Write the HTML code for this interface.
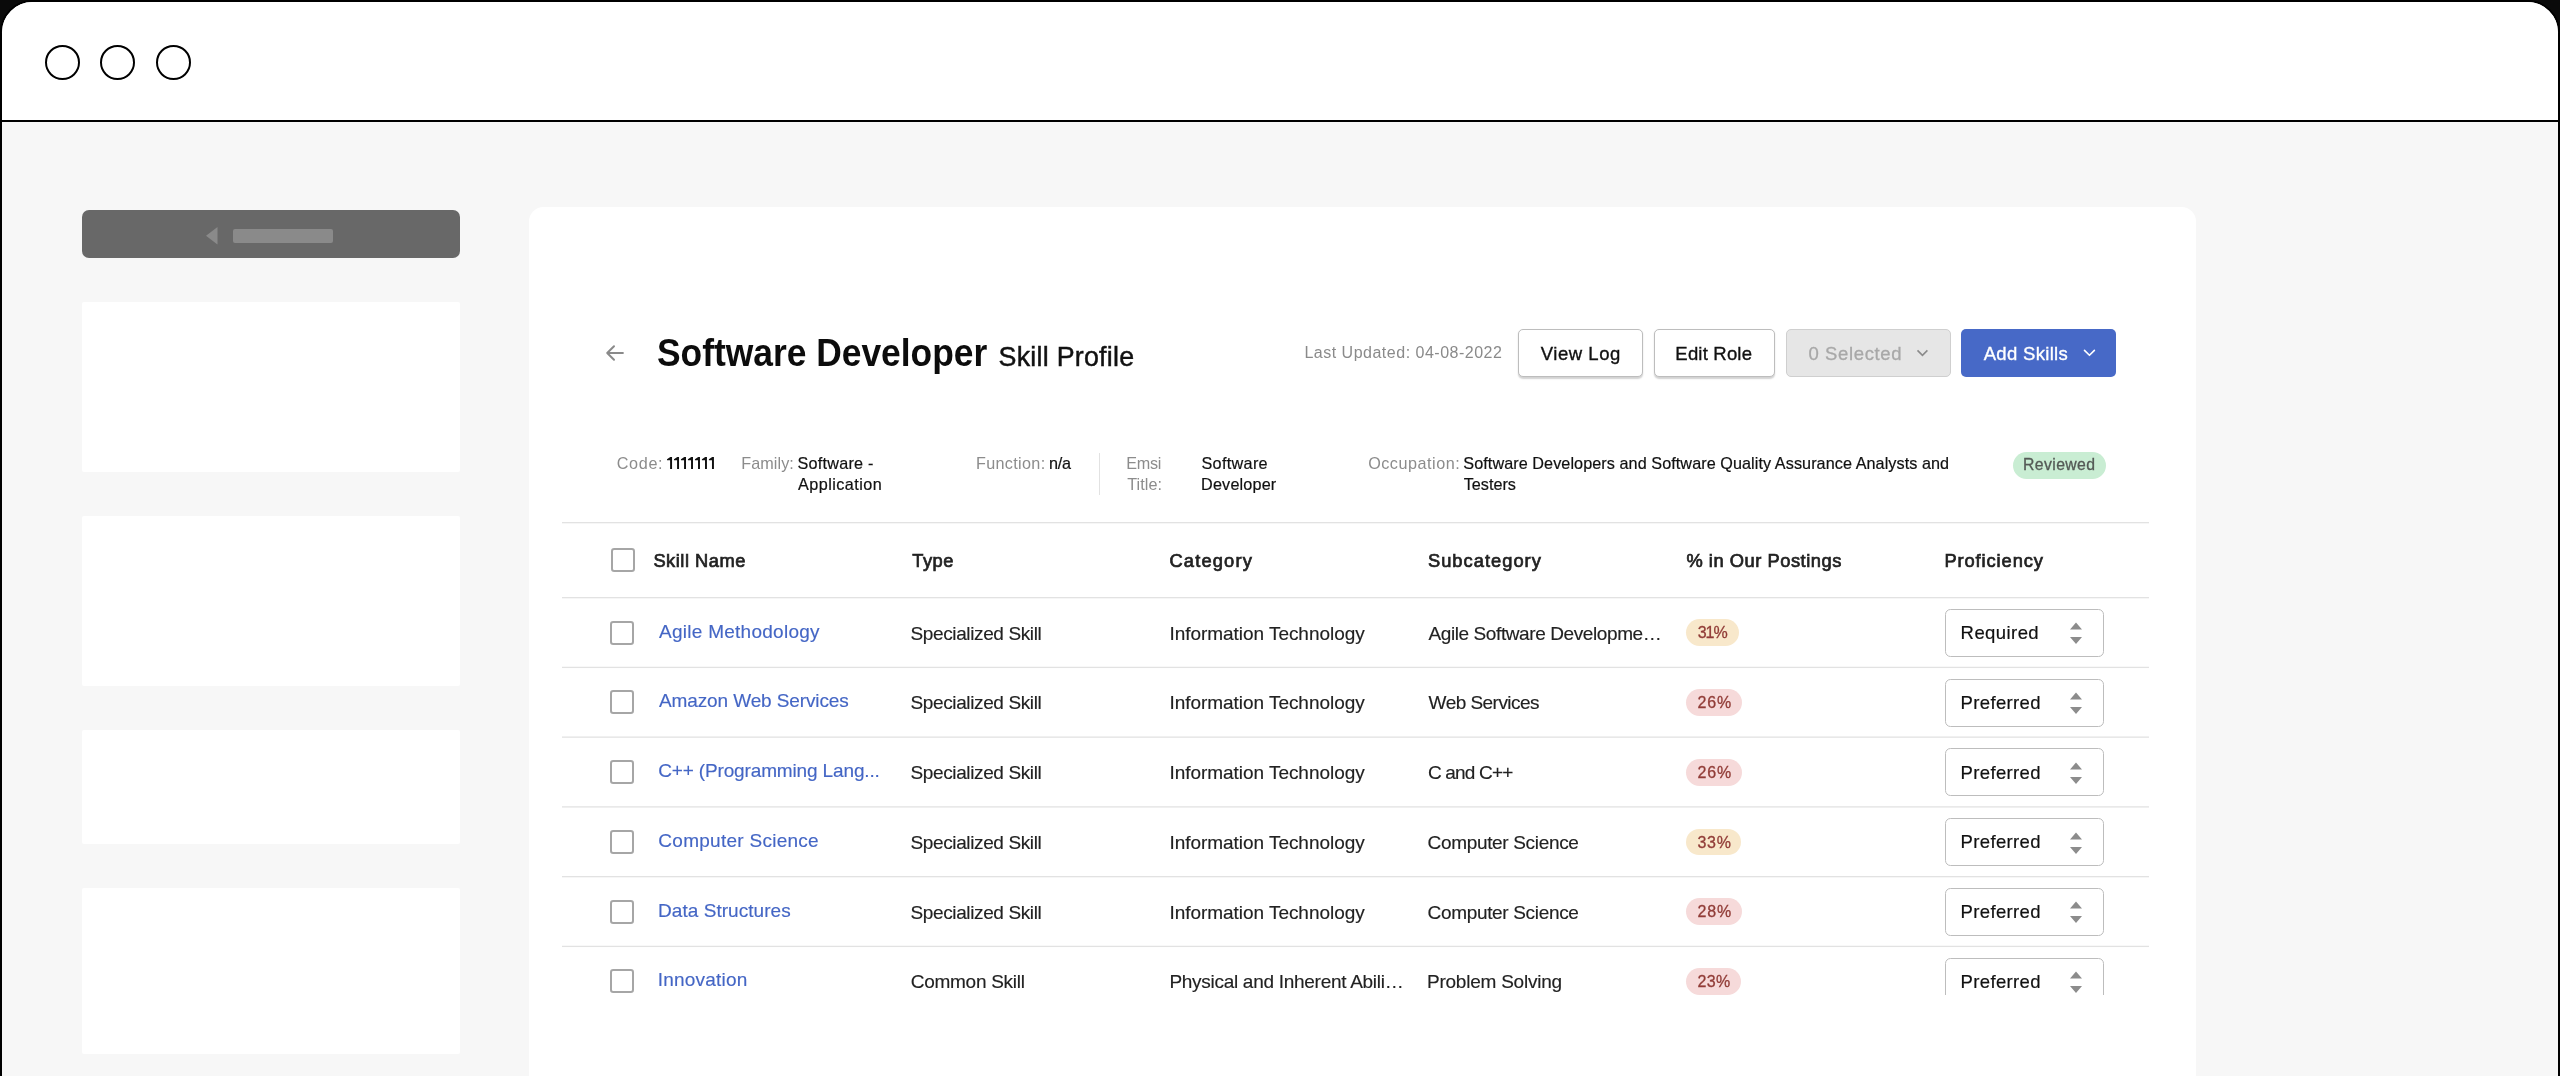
<!DOCTYPE html>
<html>
<head>
<meta charset="utf-8">
<title>Skill Profile</title>
<style>
html,body{margin:0;padding:0;}
body{width:2560px;height:1076px;background:#0a0a0a;overflow:hidden;position:relative;font-family:"Liberation Sans",sans-serif;color:#111;}
*{box-sizing:border-box;}
#win{position:absolute;left:0;top:0;width:2560px;height:1200px;border:2px solid #000;border-radius:32.5px;background:#f7f7f7;}
#bar{position:absolute;left:2px;top:2px;width:2556px;height:118px;background:#fff;border-radius:30.5px 30.5px 0 0;}
#barline{position:absolute;left:0;top:120px;width:2560px;height:2px;background:#000;}
.dot{position:absolute;top:44.9px;width:34.9px;height:34.9px;border:2px solid #000;border-radius:50%;background:#fff;}
.sb{position:absolute;left:82px;width:378px;background:#fff;border-radius:2px;}
#card{position:absolute;left:529.3px;top:206.7px;width:1667px;height:900px;background:#fff;border-radius:14.5px;}
.t{position:absolute;white-space:nowrap;line-height:1;}
.btn{position:absolute;top:329px;height:48px;border-radius:5px;}
.bt{font-size:18.5px;}
.hl{position:absolute;left:562px;width:1587.3px;height:3px;}
.cb{position:absolute;left:610.4px;width:24px;height:24px;border:2.4px solid #a6a6a6;border-radius:3.2px;background:#fff;}
.lnk{color:#4466c5;font-size:19px;-webkit-text-stroke:0.15px #4466c5;}
.lato{color:#222;font-size:19px;-webkit-text-stroke:0.15px #222;}
.pill{position:absolute;left:1686.3px;height:26.8px;border-radius:14px;}
.pt{font-size:16px;color:#913c37;-webkit-text-stroke:0.3px #913c37;}
.sel{position:absolute;left:1945.3px;width:158.5px;height:48px;border:1.5px solid #bdbdbd;border-radius:5.5px;background:#fff;}
.st{font-size:18.5px;color:#111;-webkit-text-stroke:0.2px #111;}
.sel svg{position:absolute;left:122.8px;top:12.5px;}
.th{font-size:18.3px;color:#222;-webkit-text-stroke:0.7px #222;}
.mk{color:#8c8c8c;font-size:16.2px;}
.mv{color:#111;font-size:16.2px;-webkit-text-stroke:0.2px #111;}
#clip{position:absolute;left:0;top:0;width:2560px;height:995px;overflow:hidden;}
#layer{position:absolute;left:0;top:0;width:2560px;height:1076px;will-change:transform;}
</style>
</head>
<body>
<div id="layer">
<div id="win"></div>
<div id="bar"></div>
<div id="barline"></div>
<div class="dot" style="left:45.2px"></div>
<div class="dot" style="left:100.3px"></div>
<div class="dot" style="left:155.8px"></div>

<div id="backbtn" style="position:absolute;left:82px;top:210px;width:378px;height:48px;background:#686868;border-radius:7px;"></div>
<svg style="position:absolute;left:205px;top:226px" width="14" height="20" viewBox="0 0 14 20"><path d="M12.5 1 L12.5 18.5 L1 9.7 Z" fill="#8a8a8a"/></svg>
<div style="position:absolute;left:233px;top:229px;width:100px;height:14px;background:#8a8a8a;border-radius:2px;"></div>
<div class="sb" style="top:302px;height:170px"></div>
<div class="sb" style="top:516px;height:170px"></div>
<div class="sb" style="top:730px;height:114px"></div>
<div class="sb" style="top:888px;height:166px"></div>

<div id="card"></div>

<svg style="position:absolute;left:605px;top:343px" width="20" height="20" viewBox="0 0 20 20"><path d="M17.9 10 H2.2 M9 3.2 L2.2 10 L9 16.8" fill="none" stroke="#8a8a8a" stroke-width="2" stroke-linecap="round" stroke-linejoin="round"/></svg>

<div class="btn" id="b1" style="left:1517.5px;width:125.5px;border:1.5px solid #bdbdbd;background:#fff;box-shadow:0 1.5px 1.5px rgba(0,0,0,0.18)"></div>
<div class="btn" id="b2" style="left:1653.5px;width:121.5px;border:1.5px solid #bdbdbd;background:#fff;box-shadow:0 1.5px 1.5px rgba(0,0,0,0.18)"></div>
<div class="btn" id="b3" style="left:1786px;width:164.5px;border:1.5px solid #cfcfcf;background:#e6e6e6;"></div>
<svg style="position:absolute;left:1916px;top:348px" width="14" height="10" viewBox="0 0 14 10"><path d="M1.5 2.4 L6.45 7.3 L11.4 2.4" fill="none" stroke="#8a8a8a" stroke-width="1.6" stroke-linecap="butt" stroke-linejoin="miter"/></svg>
<div class="btn" id="b4" style="left:1961px;width:155px;background:#4769c7;"></div>
<svg style="position:absolute;left:2082.9px;top:348px" width="14" height="10" viewBox="0 0 14 10"><path d="M1.5 2.4 L6.45 7.3 L11.4 2.4" fill="none" stroke="#fff" stroke-width="1.6" stroke-linecap="round" stroke-linejoin="round"/></svg>

<div style="position:absolute;left:1098.5px;top:453px;width:1.5px;height:42px;background:#e2e2e2"></div>
<div style="position:absolute;left:2013px;top:452px;width:92.5px;height:27px;border-radius:14px;background:#c9edd3"></div>

<div class="cb" style="left:611px;top:548.1px"></div>
<span class="t" id="title" style="left:656.50px;top:333.40px;font-size:39px;font-weight:bold;color:#0c0c0c;transform:scaleX(0.907);transform-origin:0 0;">Software Developer</span>
<span class="t" id="sub" style="left:998.57px;top:343.60px;letter-spacing:0.252px;font-size:26.8px;color:#111;-webkit-text-stroke:0.45px #111;">Skill Profile</span>
<span class="t" id="upd" style="left:1304.39px;top:344.90px;letter-spacing:0.506px;font-size:16px;color:#8a8a8a;">Last Updated: 04-08-2022</span>
<span class="t bt" id="b1t" style="left:1540.73px;top:344.50px;letter-spacing:0.545px;color:#111;-webkit-text-stroke:0.35px #111;">View Log</span>
<span class="t bt" id="b2t" style="left:1675.35px;top:344.50px;letter-spacing:0.193px;color:#111;-webkit-text-stroke:0.35px #111;">Edit Role</span>
<span class="t bt" id="b3t" style="left:1808.38px;top:344.50px;letter-spacing:0.643px;color:#a8a8a8;-webkit-text-stroke:0.3px #a8a8a8;">0 Selected</span>
<span class="t bt" id="b4t" style="left:1983.66px;top:344.50px;letter-spacing:0.319px;color:#fff;-webkit-text-stroke:0.35px #fff;">Add Skills</span>
<span class="t mk" id="m1" style="left:616.75px;top:455.20px;letter-spacing:0.660px;">Code:</span>
<svg id="m2" style="position:absolute;left:667px;top:456.5px" width="48" height="12" viewBox="0 0 48 12" fill="#111"><path d="M0.00 2.2 L3.30 0 L5.05 0 L5.05 11.9 L3.10 11.9 L3.10 3.3 L0.00 3.3 Z"/><path d="M6.98 2.2 L10.28 0 L12.03 0 L12.03 11.9 L10.08 11.9 L10.08 3.3 L6.98 3.3 Z"/><path d="M13.96 2.2 L17.26 0 L19.01 0 L19.01 11.9 L17.06 11.9 L17.06 3.3 L13.96 3.3 Z"/><path d="M20.94 2.2 L24.24 0 L25.99 0 L25.99 11.9 L24.04 11.9 L24.04 3.3 L20.94 3.3 Z"/><path d="M27.92 2.2 L31.22 0 L32.97 0 L32.97 11.9 L31.02 11.9 L31.02 3.3 L27.92 3.3 Z"/><path d="M34.90 2.2 L38.20 0 L39.95 0 L39.95 11.9 L38.00 11.9 L38.00 3.3 L34.90 3.3 Z"/><path d="M41.88 2.2 L45.18 0 L46.93 0 L46.93 11.9 L44.98 11.9 L44.98 3.3 L41.88 3.3 Z"/></svg>
<span class="t mk" id="m3" style="left:741.29px;top:455.20px;letter-spacing:0.056px;">Family:</span>
<span class="t mv" id="m4" style="left:797.38px;top:455.20px;letter-spacing:0.262px;">Software -</span>
<span class="t mv" id="m5" style="left:798.00px;top:476.00px;letter-spacing:0.449px;">Application</span>
<span class="t mk" id="m6" style="left:975.93px;top:455.20px;letter-spacing:0.331px;">Function:</span>
<span class="t mv" id="m7" style="left:1048.89px;top:455.20px;letter-spacing:-0.150px;">n/a</span>
<span class="t mk" id="m8" style="left:1126.26px;top:455.20px;letter-spacing:-0.307px;">Emsi</span>
<span class="t mk" id="m9" style="left:1127.28px;top:476.00px;letter-spacing:0.063px;">Title:</span>
<span class="t mv" id="m10" style="left:1201.43px;top:455.20px;letter-spacing:0.331px;">Software</span>
<span class="t mv" id="m11" style="left:1201.10px;top:476.00px;letter-spacing:0.166px;">Developer</span>
<span class="t mk" id="m12" style="left:1368.13px;top:455.20px;letter-spacing:0.528px;">Occupation:</span>
<span class="t mv" id="m13" style="left:1463.33px;top:455.20px;letter-spacing:0.071px;">Software Developers and Software Quality Assurance Analysts and</span>
<span class="t mv" id="m14" style="left:1463.66px;top:476.00px;letter-spacing:0.016px;">Testers</span>
<span class="t" id="rev" style="left:2022.99px;top:457.30px;letter-spacing:0.385px;font-size:15.8px;color:#545a56;-webkit-text-stroke:0.3px #545a56;">Reviewed</span>
<span class="t th" id="h1" style="left:653.39px;top:551.70px;letter-spacing:0.515px;">Skill Name</span>
<span class="t th" id="h2" style="left:912.37px;top:551.70px;letter-spacing:0.441px;">Type</span>
<span class="t th" id="h3" style="left:1169.40px;top:551.70px;letter-spacing:1.188px;">Category</span>
<span class="t th" id="h4" style="left:1427.92px;top:551.70px;letter-spacing:1.030px;">Subcategory</span>
<span class="t th" id="h5" style="left:1686.45px;top:551.70px;letter-spacing:0.536px;">% in Our Postings</span>
<span class="t th" id="h6" style="left:1944.47px;top:551.70px;letter-spacing:0.902px;">Proficiency</span>
<div class="hl" style="top:522px;background:linear-gradient(to bottom,#e2e2e2 0 1px,#f6f6f6 1px 2px,#ffffff 2px 3px)"></div>
<div id="clip">
<div class="hl" style="top:597px;background:linear-gradient(to bottom,#e2e2e2 0 1px,#f6f6f6 1px 2px,#ffffff 2px 3px)"></div>
<div class="cb" style="top:620.70px"></div>
<span class="t lnk" id="l0" style="left:659.01px;top:621.70px;letter-spacing:0.267px;">Agile Methodology</span>
<span class="t lato" id="a0" style="left:910.53px;top:623.50px;letter-spacing:-0.376px;">Specialized Skill</span>
<span class="t lato" id="g0" style="left:1169.46px;top:623.50px;letter-spacing:-0.042px;">Information Technology</span>
<span class="t lato" id="c0" style="left:1428.46px;top:623.50px;letter-spacing:-0.398px;">Agile Software Developme…</span>
<div class="pill" style="top:619.30px;width:52.5px;background:#f8e8cb"></div>
<span class="t pt" id="p0" style="left:1697.63px;top:625.30px;letter-spacing:-0.973px;">31%</span>
<div class="sel" style="top:608.80px"><svg width="14" height="23" viewBox="0 0 14 23"><path d="M7 0.6 L13 7.5 L1 7.5 Z M7 22 L13 15.1 L1 15.1 Z" fill="#8c8c8c"/></svg></div>
<span class="t st" id="s0" style="left:1960.61px;top:624.20px;letter-spacing:0.421px;">Required</span>
<div class="hl" style="top:666px;background:linear-gradient(to bottom,#f8f8f8 0 1px,#e2e2e2 1px 2px,#fefefe 2px 3px)"></div>
<div class="cb" style="top:690.45px"></div>
<span class="t lnk" id="l1" style="left:659.01px;top:691.45px;letter-spacing:-0.115px;">Amazon Web Services</span>
<span class="t lato" id="a1" style="left:910.53px;top:693.25px;letter-spacing:-0.376px;">Specialized Skill</span>
<span class="t lato" id="g1" style="left:1169.46px;top:693.25px;letter-spacing:-0.042px;">Information Technology</span>
<span class="t lato" id="c1" style="left:1428.61px;top:693.25px;letter-spacing:-0.541px;">Web Services</span>
<div class="pill" style="top:689.05px;width:55.6px;background:#f6dada"></div>
<span class="t pt" id="p1" style="left:1697.41px;top:695.05px;letter-spacing:0.937px;">26%</span>
<div class="sel" style="top:678.55px"><svg width="14" height="23" viewBox="0 0 14 23"><path d="M7 0.6 L13 7.5 L1 7.5 Z M7 22 L13 15.1 L1 15.1 Z" fill="#8c8c8c"/></svg></div>
<span class="t st" id="s1" style="left:1960.61px;top:693.95px;letter-spacing:0.336px;">Preferred</span>
<div class="hl" style="top:736px;background:linear-gradient(to bottom,#f0f0f0 0 1px,#e8e8e8 1px 2px,#ffffff 2px 3px)"></div>
<div class="cb" style="top:760.20px"></div>
<span class="t lnk" id="l2" style="left:658.15px;top:761.20px;letter-spacing:-0.139px;">C++ (Programming Lang...</span>
<span class="t lato" id="a2" style="left:910.53px;top:763.00px;letter-spacing:-0.376px;">Specialized Skill</span>
<span class="t lato" id="g2" style="left:1169.46px;top:763.00px;letter-spacing:-0.042px;">Information Technology</span>
<span class="t lato" id="c2" style="left:1427.94px;top:763.00px;letter-spacing:-0.817px;">C and C++</span>
<div class="pill" style="top:758.80px;width:55.6px;background:#f6dada"></div>
<span class="t pt" id="p2" style="left:1697.41px;top:764.80px;letter-spacing:0.937px;">26%</span>
<div class="sel" style="top:748.30px"><svg width="14" height="23" viewBox="0 0 14 23"><path d="M7 0.6 L13 7.5 L1 7.5 Z M7 22 L13 15.1 L1 15.1 Z" fill="#8c8c8c"/></svg></div>
<span class="t st" id="s2" style="left:1960.61px;top:763.70px;letter-spacing:0.336px;">Preferred</span>
<div class="hl" style="top:806px;background:linear-gradient(to bottom,#e9e9e9 0 1px,#efefef 1px 2px,#ffffff 2px 3px)"></div>
<div class="cb" style="top:829.95px"></div>
<span class="t lnk" id="l3" style="left:658.37px;top:830.95px;letter-spacing:0.267px;">Computer Science</span>
<span class="t lato" id="a3" style="left:910.53px;top:832.75px;letter-spacing:-0.376px;">Specialized Skill</span>
<span class="t lato" id="g3" style="left:1169.46px;top:832.75px;letter-spacing:-0.042px;">Information Technology</span>
<span class="t lato" id="c3" style="left:1427.61px;top:832.75px;letter-spacing:-0.336px;">Computer Science</span>
<div class="pill" style="top:828.55px;width:54.9px;background:#f8e8cb"></div>
<span class="t pt" id="p3" style="left:1697.44px;top:834.55px;letter-spacing:0.750px;">33%</span>
<div class="sel" style="top:818.05px"><svg width="14" height="23" viewBox="0 0 14 23"><path d="M7 0.6 L13 7.5 L1 7.5 Z M7 22 L13 15.1 L1 15.1 Z" fill="#8c8c8c"/></svg></div>
<span class="t st" id="s3" style="left:1960.61px;top:833.45px;letter-spacing:0.336px;">Preferred</span>
<div class="hl" style="top:876px;background:linear-gradient(to bottom,#e2e2e2 0 1px,#f6f6f6 1px 2px,#ffffff 2px 3px)"></div>
<div class="cb" style="top:899.70px"></div>
<span class="t lnk" id="l4" style="left:658.06px;top:900.70px;letter-spacing:0.047px;">Data Structures</span>
<span class="t lato" id="a4" style="left:910.53px;top:902.50px;letter-spacing:-0.376px;">Specialized Skill</span>
<span class="t lato" id="g4" style="left:1169.46px;top:902.50px;letter-spacing:-0.042px;">Information Technology</span>
<span class="t lato" id="c4" style="left:1427.61px;top:902.50px;letter-spacing:-0.336px;">Computer Science</span>
<div class="pill" style="top:898.30px;width:55.8px;background:#f6dada"></div>
<span class="t pt" id="p4" style="left:1697.54px;top:904.30px;letter-spacing:0.873px;">28%</span>
<div class="sel" style="top:887.80px"><svg width="14" height="23" viewBox="0 0 14 23"><path d="M7 0.6 L13 7.5 L1 7.5 Z M7 22 L13 15.1 L1 15.1 Z" fill="#8c8c8c"/></svg></div>
<span class="t st" id="s4" style="left:1960.61px;top:903.20px;letter-spacing:0.336px;">Preferred</span>
<div class="hl" style="top:945px;background:linear-gradient(to bottom,#f8f8f8 0 1px,#e2e2e2 1px 2px,#fefefe 2px 3px)"></div>
<div class="cb" style="top:969.45px"></div>
<span class="t lnk" id="l5" style="left:657.81px;top:970.45px;letter-spacing:0.210px;">Innovation</span>
<span class="t lato" id="a5" style="left:910.78px;top:972.25px;letter-spacing:-0.273px;">Common Skill</span>
<span class="t lato" id="g5" style="left:1169.38px;top:972.25px;letter-spacing:-0.281px;">Physical and Inherent Abili…</span>
<span class="t lato" id="c5" style="left:1426.97px;top:972.25px;letter-spacing:-0.231px;">Problem Solving</span>
<div class="pill" style="top:968.05px;width:54.8px;background:#f6dada"></div>
<span class="t pt" id="p5" style="left:1697.54px;top:974.05px;letter-spacing:0.373px;">23%</span>
<div class="sel" style="top:957.55px"><svg width="14" height="23" viewBox="0 0 14 23"><path d="M7 0.6 L13 7.5 L1 7.5 Z M7 22 L13 15.1 L1 15.1 Z" fill="#8c8c8c"/></svg></div>
<span class="t st" id="s5" style="left:1960.61px;top:972.95px;letter-spacing:0.336px;">Preferred</span>
</div>
</div>
</body>
</html>
